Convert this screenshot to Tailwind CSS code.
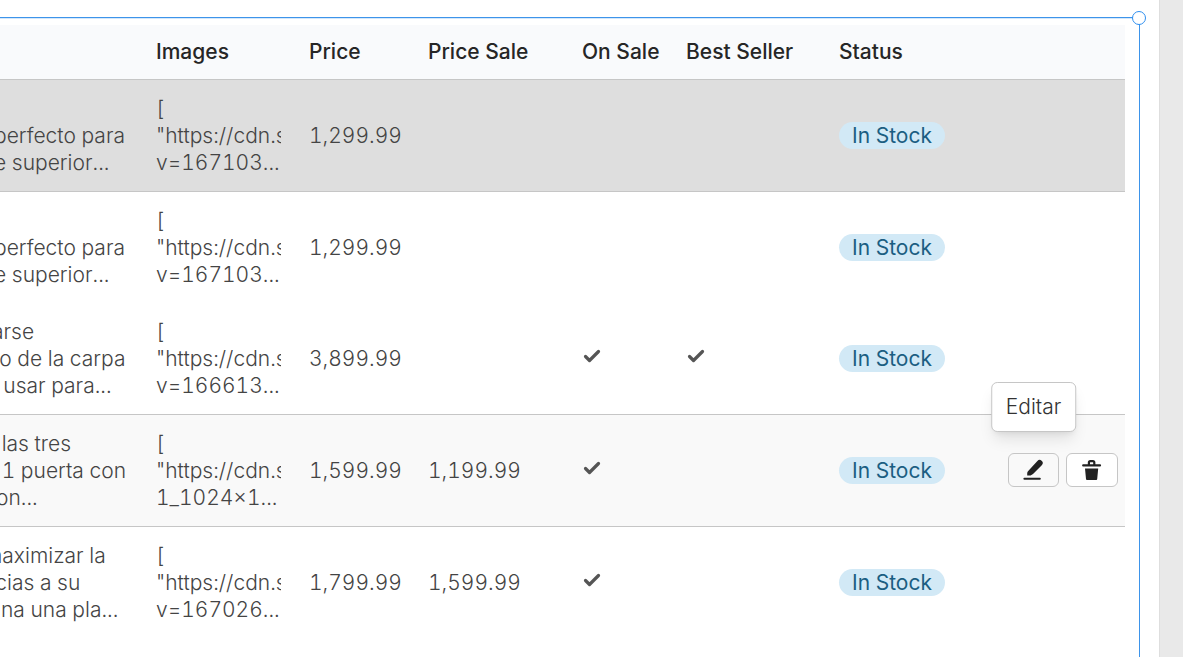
<!DOCTYPE html>
<html lang="es">
<head>
    <meta charset="UTF-8">
    <meta name="viewport" content="width=device-width, initial-scale=1.0">
    <title>Products</title>
    <script src="https://cdn.jsdelivr.net/npm/@tailwindcss/browser@4"></script>
</head>
<body class="bg-[#e9e9e9] font-['Inter','Liberation_Sans',sans-serif] text-[21px] leading-[27px] text-[#444] overflow-hidden">
    <!-- Icons -->
    <svg class="hidden">
        <symbol id="check" viewBox="0 0 20 20">
            <path d="M3.5 10.5 7.5 14.5 16.5 5.5" fill="none" stroke="currentColor" stroke-width="3.2" stroke-linecap="round" stroke-linejoin="round"></path>
        </symbol>
    </svg>

    <!-- Canvas -->
    <main class="h-screen mr-[23px] pt-[17px] pr-[19px] bg-white border-r border-[#dedede] overflow-hidden">
        <!-- Selected table component -->
        <section class="relative min-h-full pt-[7px] pr-[14px] border-t border-r border-[#3d94ea] shadow-[inset_0_1px_0_#d3e7fb]">
            <span class="absolute -top-[7px] -right-[7px] size-[14px] rounded-full border border-[#2f8fef] bg-white"></span>

            <table class="w-full table-fixed text-left font-light tabular-nums">
                <colgroup>
                    <col class="w-[142px]">
                    <col class="w-[153px]">
                    <col class="w-[119px]">
                    <col class="w-[154px]">
                    <col class="w-[104px]">
                    <col class="w-[153px]">
                    <col>
                    <col class="w-[140px]">
                </colgroup>
                <thead class="bg-[#f9fafc] text-[#262626] border-b border-[#c6c6c6]">
                    <tr class="h-[54px]">
                        <td></td>
                        <th class="px-[14px] font-medium">Images</th>
                        <th class="px-[14px] font-medium">Price</th>
                        <th class="px-[14px] font-medium">Price Sale</th>
                        <th class="pl-[14px] font-medium whitespace-nowrap">On Sale</th>
                        <th class="px-[14px] font-medium">Best Seller</th>
                        <th class="px-[14px] font-medium">Status</th>
                        <td></td>
                    </tr>
                </thead>
                <tbody>
                    <tr class="h-[112px] bg-[#dedede] border-b border-[#c6c6c6]">
                        <td class="whitespace-pre"><div class="-ml-1.5"><br>perfecto para<br>e superior...</div></td>
                        <td class="px-[14px]"><div class="overflow-hidden whitespace-nowrap">[<br>"https://cdn.s<br>v=167103...</div></td>
                        <td class="px-[14px] text-right">1,299.99</td>
                        <td></td>
                        <td></td>
                        <td></td>
                        <td class="px-[14px]"><span class="inline-block rounded-full bg-[#d2e9f6] px-[13px] font-normal text-[#1b5e82]">In Stock</span></td>
                        <td></td>
                    </tr>
                    <tr class="h-[112px]">
                        <td class="whitespace-pre"><div class="-ml-1.5"><br>perfecto para<br>e superior...</div></td>
                        <td class="px-[14px]"><div class="overflow-hidden whitespace-nowrap">[<br>"https://cdn.s<br>v=167103...</div></td>
                        <td class="px-[14px] text-right">1,299.99</td>
                        <td></td>
                        <td></td>
                        <td></td>
                        <td class="px-[14px]"><span class="inline-block rounded-full bg-[#d2e9f6] px-[13px] font-normal text-[#1b5e82]">In Stock</span></td>
                        <td></td>
                    </tr>
                    <tr class="h-[111px] border-b border-[#c6c6c6]">
                        <td class="whitespace-pre"><div class="-ml-2">arse<br>ro de la carpa<br>  usar para...</div></td>
                        <td class="px-[14px]"><div class="overflow-hidden whitespace-nowrap">[<br>"https://cdn.s<br>v=166613...</div></td>
                        <td class="px-[14px] text-right">3,899.99</td>
                        <td></td>
                        <td class="px-[14px]"><svg class="size-5 mb-1 text-[#555]"><use href="#check"></use></svg></td>
                        <td class="px-[14px]"><svg class="size-5 mb-1 text-[#555]"><use href="#check"></use></svg></td>
                        <td class="px-[14px]"><span class="inline-block rounded-full bg-[#d2e9f6] px-[13px] font-normal text-[#1b5e82]">In Stock</span></td>
                        <td></td>
                    </tr>
                    <tr class="h-[112px] bg-[#f9f9f9] border-b border-[#c6c6c6]">
                        <td class="whitespace-pre"><div class="-ml-1"> las tres<br> 1 puerta con<br>on...</div></td>
                        <td class="px-[14px]"><div class="overflow-hidden whitespace-nowrap">[<br>"https://cdn.s<br>1_1024×1...</div></td>
                        <td class="px-[14px] text-right">1,599.99</td>
                        <td class="px-[14px]">1,199.99</td>
                        <td class="px-[14px]"><svg class="size-5 mb-1 text-[#555]"><use href="#check"></use></svg></td>
                        <td></td>
                        <td class="px-[14px]"><span class="inline-block rounded-full bg-[#d2e9f6] px-[13px] font-normal text-[#1b5e82]">In Stock</span></td>
                        <td>
                            <div class="flex justify-end gap-[7px] pr-[7px]">
                                <div class="relative">
                                    <button type="button" aria-label="Editar" class="flex h-[34px] w-[51px] items-center justify-center rounded-md border border-[#c6c6c6] bg-[#f9f9f9] text-[#222]">
                                        <svg class="size-6" viewBox="0 0 24 24" fill="currentColor">
                                            <path d="M5.2 17.6v-2.4c0-.9.4-1.7 1-2.3l9.2-9.8a2.9 2.9 0 0 1 4.6 3.8l-9 9.2c-1 .9-2.2 1.5-3.4 1.5z"></path>
                                            <path d="M2.4 20.7h15.4" stroke="currentColor" stroke-width="2" stroke-linecap="round"></path>
                                        </svg>
                                    </button>
                                    <div role="tooltip" class="absolute bottom-[55px] left-1/2 -translate-x-1/2 rounded-md border border-[#c6c6c6] bg-white px-[14px] py-[11px] leading-[26px] text-[#333] shadow-lg">Editar</div>
                                </div>
                                <button type="button" aria-label="Eliminar" class="flex h-[34px] w-[52px] items-center justify-center rounded-md border border-[#c6c6c6] bg-white text-[#222]">
                                    <svg class="size-6" viewBox="0 0 24 24">
                                        <path d="M3.2 7.4h16.8M8.9 7V4.6q0-1.4 1.4-1.4h2.6q1.4 0 1.4 1.4V7" fill="none" stroke="currentColor" stroke-width="2.2" stroke-linecap="round"></path>
                                        <path d="M5 10.4h13.2l-1 10.7q0 .9-1 .9H7q-1 0-1-.9z" fill="currentColor"></path>
                                    </svg>
                                </button>
                            </div>
                        </td>
                    </tr>
                    <tr class="h-[112px]">
                        <td class="whitespace-pre"><div class="-ml-4">maximizar la<br>  cias a su<br>   na una pla...</div></td>
                        <td class="px-[14px]"><div class="overflow-hidden whitespace-nowrap">[<br>"https://cdn.s<br>v=167026...</div></td>
                        <td class="px-[14px] text-right">1,799.99</td>
                        <td class="px-[14px]">1,599.99</td>
                        <td class="px-[14px]"><svg class="size-5 mb-1 text-[#555]"><use href="#check"></use></svg></td>
                        <td></td>
                        <td class="px-[14px]"><span class="inline-block rounded-full bg-[#d2e9f6] px-[13px] font-normal text-[#1b5e82]">In Stock</span></td>
                        <td></td>
                    </tr>
                </tbody>
            </table>
        </section>
    </main>
</body>
</html>
